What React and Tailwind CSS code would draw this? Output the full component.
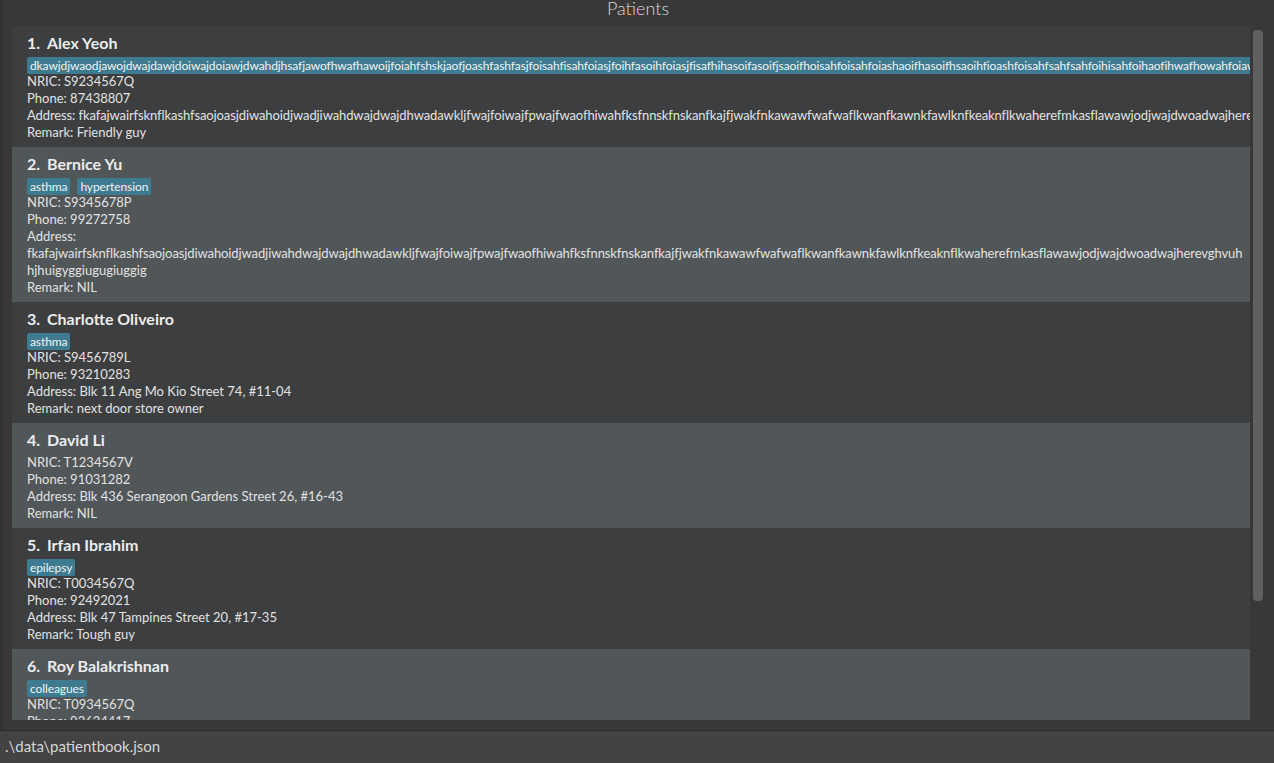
const longTag =
  "dkawjdjwaodjawojdwajdawjdoiwajdoiawjdwahdjhsafjawofhwafhawoijfoiahfshskjaofjoashfashfasjfoisahfisahfoiasjfoihfasoihfoiasjfisafhihasoifasoifjsaoifhoisahfoisahfoiashaoifhasoifhsaoihfioashfoisahfsahfsahfoihisahfoihaofihwafhowahfoiawfhoiwafhoiawhfoiwahfoiawhf";
const longAddr =
  "fkafajwairfsknflkashfsaojoasjdiwahoidjwadjiwahdwajdwajdhwadawkljfwajfoiwajfpwajfwaofhiwahfksfnnskfnskanfkajfjwakfnkawawfwafwaflkwanfkawnkfawlknfkeaknflkwaherefmkasflawawjodjwajdwoadwajherevghvuh";

const patients = [
  {
    name: "Alex Yeoh",
    tags: [longTag],
    nric: "S9234567Q",
    phone: "87438807",
    address: [`Address: ${longAddr}hjhuigyggiugugiuggig`],
    remark: "Friendly guy",
  },
  {
    name: "Bernice Yu",
    tags: ["asthma", "hypertension"],
    nric: "S9345678P",
    phone: "99272758",
    address: ["Address:", longAddr, "hjhuigyggiugugiuggig"],
    remark: "NIL",
  },
  {
    name: "Charlotte Oliveiro",
    tags: ["asthma"],
    nric: "S9456789L",
    phone: "93210283",
    address: ["Address: Blk 11 Ang Mo Kio Street 74, #11-04"],
    remark: "next door store owner",
  },
  {
    name: "David Li",
    tags: [],
    nric: "T1234567V",
    phone: "91031282",
    address: ["Address: Blk 436 Serangoon Gardens Street 26, #16-43"],
    remark: "NIL",
  },
  {
    name: "Irfan Ibrahim",
    tags: ["epilepsy"],
    nric: "T0034567Q",
    phone: "92492021",
    address: ["Address: Blk 47 Tampines Street 20, #17-35"],
    remark: "Tough guy",
  },
  {
    name: "Roy Balakrishnan",
    tags: ["colleagues"],
    nric: "T0934567Q",
    phone: "92624417",
    address: ["Address: Blk 45 Aljunied Street 85, #11-31"],
    remark: "NIL",
  },
];

const PatientCard = ({ patient, index }) => {
  const bg = index % 2 === 0 ? "bg-[#3c3e3f]" : "bg-[#515658]";
  return (
    <div className={`${bg} shrink-0 pt-[5px] pb-[6px] pl-[15px] overflow-hidden`}>
      <div className="h-[26px] pb-[2px] flex items-center text-[16px] font-bold text-[#ececec] whitespace-nowrap">
        <span className="w-[20px]">{index + 1}.</span>
        <span>{patient.name}</span>
      </div>
      {patient.tags.length > 0 && (
        <div className="h-[16px] flex gap-[7px] whitespace-nowrap">
          {patient.tags.map((tag, i) => (
            <span
              key={i}
              className="h-[17px] leading-[17px] px-[3px] rounded-[2px] bg-[#3e7b91] text-[12px] text-[#f2f2f2] tracking-[-0.1px]"
            >
              {tag}
            </span>
          ))}
        </div>
      )}
      <div className="text-[13px] leading-[17px] text-[#e2e2e2] whitespace-nowrap">
        <div>NRIC: {patient.nric}</div>
        <div>Phone: {patient.phone}</div>
        {patient.address.map((line, i) => (
          <div key={i} className={line.length > 60 ? "tracking-[-0.1px]" : ""}>
            {line}
          </div>
        ))}
        <div>Remark: {patient.remark}</div>
      </div>
    </div>
  );
};

export default function App() {
  return (
    <div
      className="h-[763px] w-[1274px] flex flex-col bg-[#383838] overflow-hidden"
      style={{ fontFamily: "Lato, 'Open Sans', sans-serif" }}
    >
      <div className="h-[26px] shrink-0 flex justify-center items-start border-l-[2px] border-[#303030]">
        <span className="text-[18px] leading-[18px] font-light text-[#d8d8d8] -mt-[1px]">Patients</span>
      </div>

      <div className="flex-1 flex min-h-0 border-l-[2px] border-[#303030]">
        {/* list */}
        <div className="ml-[10px] w-[1238px] flex flex-col overflow-hidden">
          {patients.map((p, i) => (
            <PatientCard key={p.name} patient={p} index={i} />
          ))}
        </div>
        {/* scrollbar */}
        <div className="flex-1 pt-[4px] pl-[3px]">
          <div className="w-[10px] h-[571px] rounded-[4px] bg-[#606060]" />
        </div>
      </div>

      <div className="h-[10px] shrink-0 border-l-[2px] border-[#303030]" />
      <div className="h-[33px] shrink-0 border-t border-[#2a2a2a] bg-[#434343] flex items-center pl-[5px]">
        <span className="text-[15px] text-[#d6d6d6] -mt-[2px]">.\data\patientbook.json</span>
      </div>
    </div>
  );
}
